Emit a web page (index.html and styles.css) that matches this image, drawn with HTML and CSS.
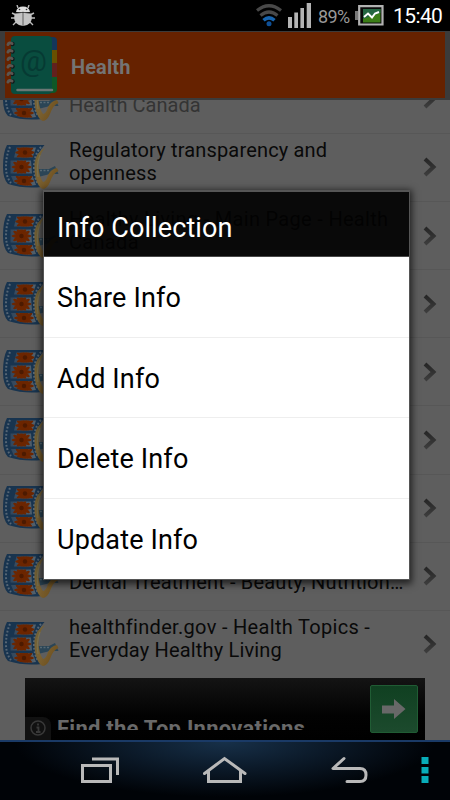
FILE: index.html
```html
<!DOCTYPE html>
<html lang="en">
<head>
<meta charset="utf-8">
<title>Health</title>
<link rel="stylesheet" href="styles.css">
</head>
<body>
<svg class="defs" aria-hidden="true">
  <defs>
    <linearGradient id="chev" x1="0" y1="0" x2="0" y2="1"><stop offset="0" stop-color="#262626"/><stop offset="1" stop-color="#3d3d3d"/></linearGradient>
    <linearGradient id="gold" x1="0" y1="0" x2="1" y2="1"><stop offset="0" stop-color="#6f6038"/><stop offset=".5" stop-color="#7a6132"/><stop offset="1" stop-color="#6a4712"/></linearGradient>
    <linearGradient id="sky" x1="0" y1="0" x2="1" y2="0"><stop offset="0" stop-color="#31465c"/><stop offset="1" stop-color="#56626c"/></linearGradient>
    <g id="flower">
      <g fill="#6c2600"><ellipse rx="10" ry="2.200"/><ellipse rx="9.500" ry="2.200" transform="rotate(30)"/><ellipse rx="8.500" ry="2.200" transform="rotate(60)"/><ellipse rx="8" ry="2.200" transform="rotate(90)"/><ellipse rx="8.500" ry="2.200" transform="rotate(120)"/><ellipse rx="9.500" ry="2.200" transform="rotate(150)"/></g>
      <circle r="2.200" fill="#4c1a00"/>
    </g>
    <clipPath id="f1"><path d="M16.500 4.500H36L32.500 14.500H14Z"/></clipPath>
    <clipPath id="f2"><path d="M10.500 17.500H31L32 30.500H10.500Z"/></clipPath>
    <clipPath id="f3"><path d="M11 33H32.500L36 42Q24 44 14 40Z"/></clipPath>
    <symbol id="film" viewBox="0 0 60 48">
      <path d="M38 26H49L55 23L58.500 31H50L38 34Z" fill="#2b4556"/>
      <path d="M40 27.500H50" stroke="#566872" stroke-width="1.500" stroke-dasharray="2 1.500"/>
      <path d="M7 2H44.500Q37 10 36 21Q35 35 42 44Q24 46 8 41Q3 36 3 24Q3 9 7 2Z" fill="#18344f"/>
      <path d="M16.500 4.500H36L32.500 14.500H14ZM10.500 17.500H31L32 30.500H10.500ZM11 33H32.500L36 42Q24 44 14 40Z" fill="url(#sky)"/>
      <g clip-path="url(#f1)"><use href="#flower" x="25" y="9.500"/></g>
      <g clip-path="url(#f2)"><use href="#flower" x="21.500" y="24"/></g>
      <g clip-path="url(#f3)"><use href="#flower" x="24" y="38"/></g>
      <path d="M10 4Q6 13 6 24Q6 34 11 40M41 4Q34 12 34 24Q34 34 38 41" fill="none" stroke="#566675" stroke-width="2" stroke-dasharray="1.800 1.800"/>
      <path d="M45 5Q36 9 34.500 20Q34 32 37 39Q39.500 45 43 46Q47 46 50 39Q53 30 58.500 28L57 25Q51 26 48 32Q46 39 43 39Q39 34 38.500 23Q38.500 12 45 5Z" fill="url(#gold)"/>
      <path d="M40 12Q36 22 38 34" fill="none" stroke="#77704f" stroke-width="1.200"/>
    </symbol>
    <symbol id="arrow" viewBox="0 0 14 20"><path d="M2 2L10.500 10L2 18" fill="none" stroke="url(#chev)" stroke-width="4"/></symbol>
  </defs>
</svg>
<div class="screen">
  <header class="status">
    <svg class="bug" viewBox="0 0 24 22">
      <path d="M5 10L1 8M4 13H0M5 17L2 20M19 10L23 8M20 13H24M19 17L22 20M7 3L6 0M17 3L18 0" stroke="#bbb" stroke-width="1.400" fill="none"/>
      <path d="M5 7Q6 1.500 12 1.500Q18 1.500 19 7Z" fill="#ddd"/>
      <path d="M4 8H20Q22 14 19 18Q16 21 12 21Q8 21 5 18Q2 14 4 8Z" fill="#c4c4c4"/>
      <path d="M4 8.500Q12 6 20 8.500M12 8V21" stroke="#555" stroke-width=".9" fill="none"/>
      <circle cx="8.500" cy="4.500" r=".8" fill="#333"/><circle cx="15.500" cy="4.500" r=".8" fill="#333"/>
    </svg>
    <div class="indicators">
      <svg class="wifi" viewBox="0 0 26 24">
        <path d="M1 7.500Q13-2 25 7.500" fill="none" stroke="#484848" stroke-width="3.200"/>
        <path d="M4.500 12.500Q13 5.500 21.500 12.500" fill="none" stroke="#484848" stroke-width="3.200"/>
        <path d="M7.500 17.300Q13 12.500 18.500 17.300" fill="none" stroke="#1764ae" stroke-width="3.500"/>
        <circle cx="13" cy="20.800" r="2.500" fill="#0e4f96"/>
      </svg>
      <svg class="signal" viewBox="0 0 24 25"><path d="M0 14H4V25H0ZM6.300 9.500H10V25H6.300ZM12.400 5H16V25H12.400ZM18.700 0H23V25H18.700Z" fill="#b4b4b4"/></svg>
      <span class="percent">89%</span>
      <svg class="battery" viewBox="0 0 29 21">
        <path d="M0 6H3V15H0Z" fill="#777"/><path d="M4.200 1.200H27.500V19.500H4.200Z" fill="#0a0a0a" stroke="#b2b2b2" stroke-width="2.200"/>
        <path d="M8 4H25.500V17.500H8Z" fill="#3b7d17"/><path d="M8 4H25.500V8L8 14Z" fill="#246642"/>
        <path d="M9 12L13 8.500L17 12.500L20 8.500L24 7" fill="none" stroke="#fff" stroke-width="1.900"/>
      </svg>
      <time class="clock">15:40</time>
    </div>
  </header>

  <div class="titlebar">
    <svg class="book" viewBox="0 0 54 60">
      <path d="M42 2H47Q51 2 51 6V16H42Z" fill="#14365a"/><path d="M42 15H51V29H42Z" fill="#685000"/><path d="M42 28H51V43H42Z" fill="#62211e"/><path d="M42 42H51V54Q51 58 47 58H42Z" fill="#0e5827"/>
      <rect x="5" y="1" width="41" height="58" rx="4" fill="#094d3f"/>
      <path d="M11.500 55H46" stroke="#6a7774" stroke-width="2.500" stroke-linecap="round"/>
      <text x="27.500" y="36" text-anchor="middle" class="at">@</text>
      <g fill="#101a1b"><circle cx="6.500" cy="9" r="2.200"/><circle cx="6.500" cy="16.500" r="2.200"/><circle cx="6.500" cy="24" r="2.200"/><circle cx="6.500" cy="31.500" r="2.200"/><circle cx="6.500" cy="39" r="2.200"/><circle cx="6.500" cy="46.500" r="2.200"/></g>
      <g stroke="#5c5651" stroke-width="3" stroke-linecap="round" fill="none"><path d="M2 9.500Q3 7 6 8.500M2 17Q3 14.500 6 16M2 24.500Q3 22 6 23.500M2 32Q3 29.500 6 31M2 39.500Q3 37 6 38.500M2 47Q3 44.500 6 46"/></g>
    </svg>
    <h1>Health</h1>
  </div>

  <main class="list">
    <article class="row"><svg class="film"><use href="#film"/></svg><p><br>Health Canada</p><svg class="arrow"><use href="#arrow"/></svg></article>
    <article class="row"><svg class="film"><use href="#film"/></svg><p>Regulatory transparency and<br>openness</p><svg class="arrow"><use href="#arrow"/></svg></article>
    <article class="row"><svg class="film"><use href="#film"/></svg><p class="wide">Healthy Living - Main Page - Health<br>Canada</p><svg class="arrow"><use href="#arrow"/></svg></article>
    <article class="row"><svg class="film"><use href="#film"/></svg><p></p><svg class="arrow"><use href="#arrow"/></svg></article>
    <article class="row"><svg class="film"><use href="#film"/></svg><p></p><svg class="arrow"><use href="#arrow"/></svg></article>
    <article class="row"><svg class="film"><use href="#film"/></svg><p></p><svg class="arrow"><use href="#arrow"/></svg></article>
    <article class="row"><svg class="film"><use href="#film"/></svg><p></p><svg class="arrow"><use href="#arrow"/></svg></article>
    <article class="row"><svg class="film"><use href="#film"/></svg><p><br>Dental Treatment - Beauty, Nutrition…</p><svg class="arrow"><use href="#arrow"/></svg></article>
    <article class="row"><svg class="film"><use href="#film"/></svg><p><span class="wide">healthfinder.gov - Health Topics -</span><br>Everyday Healthy Living</p><svg class="arrow"><use href="#arrow"/></svg></article>
  </main>

  <aside class="ad">
    <div class="info"><svg viewBox="0 0 16 16"><circle cx="8" cy="8" r="7" fill="none" stroke="#393939" stroke-width="1.500"/><path d="M8 3.500V5.500M6.500 7.500H8.500V12M6 12H10.500" fill="none" stroke="#393939" stroke-width="1.800"/></svg></div>
    <div class="pitch">Find the Top Innovations</div>
    <div class="go"><svg viewBox="0 0 24 20"><path d="M0 6.500H12V0L23.500 10L12 20V14.500H0Z" fill="#686868"/></svg></div>
  </aside>

  <nav class="nav">
    <svg viewBox="0 0 450 60">
      <g fill="none" stroke="#b9b9b9" stroke-width="3">
        <path d="M82.500 25.500H110.500V41.500H82.500Z"/><path d="M92 19H117.500V35"/>
        <path d="M204.500 33.500L224.500 18.500L245 33.500" stroke-linecap="round"/><path d="M208.500 31V41.500H240.500V31"/>
        <path d="M344 18.500L333 28.500H360Q366 28.500 366 35Q366 41.500 360 41.500H347" stroke-linecap="round" stroke-linejoin="round"/>
      </g>
      <path d="M421.500 17H428.500V24H421.500ZM421.500 27H428.500V33.500H421.500ZM421.500 36H428.500V43H421.500Z" fill="#08adb9"/>
    </svg>
  </nav>

  <section class="dialog">
    <h2>Info Collection</h2>
    <ul><li>Share Info</li><li>Add Info</li><li>Delete Info</li><li>Update Info</li></ul>
  </section>
</div>
</body>
</html>
```
FILE: styles.css
```css
* { box-sizing: border-box; margin: 0; padding: 0; }
body { font-family: Roboto, sans-serif; background: #000; }
.defs { position: absolute; width: 0; height: 0; }
.screen { position: relative; width: 450px; height: 800px; overflow: hidden; display: flex; flex-direction: column; }

.status { height: 31px; flex: none; background: #000; display: flex; justify-content: space-between; padding: 0 8px 0 11px; }
.bug { width: 24px; height: 22px; margin-top: 5px; }
.indicators { display: flex; align-items: flex-start; }
.wifi { width: 26px; height: 24px; margin: 3px 6px 0 0; }
.signal { width: 24px; height: 25px; margin: 3px 6px 0 0; }
.percent { font-size: 18px; line-height: 33px; color: #999; width: 37px; letter-spacing: -.6px; }
.battery { width: 29px; height: 21px; margin: 5px 9px 0 0; }
.clock { font-size: 21px; line-height: 33px; color: #fff; width: 49px; letter-spacing: -.6px; }

.titlebar { height: 69px; flex: none; display: flex; align-items: center; border: solid #3b3b3b; border-width: 1px 5px 2px; background: #662200; padding-left: 1px; }
.book { width: 54px; height: 60px; margin-right: 11px; }
.at { font-size: 30px; fill: #063a33; }
h1 { font-size: 20px; line-height: 24px; font-weight: 700; color: #747474; padding-top: 3px; letter-spacing: .1px; }

.list { height: 578px; flex: none; overflow: hidden; background: #5e5e5e; display: flex; flex-direction: column; justify-content: flex-end; }
.row { height: 68.150px; flex: none; display: flex; align-items: center; border-top: 1px solid #575757; }
.film { width: 60px; height: 48px; flex: none; }
.row p { width: 354px; height: 56px; margin-left: 9px; font-size: 20px; line-height: 23px; letter-spacing: .17px; color: #090909; white-space: nowrap; }
.row .wide { letter-spacing: .31px; }
.row:first-child p { color: #343434; letter-spacing: .05px; }
.arrow { width: 14px; height: 20px; }

.ad { height: 62px; flex: none; background: linear-gradient(#141414, #020202 60%, #000); border: solid #5e5e5e; border-width: 0 25px; display: flex; justify-content: space-between; }
.info { width: 26px; height: 23px; margin-top: 39px; background: #111; border-radius: 0 8px 0 0; padding: 3px 0 0 5px; }
.info svg { width: 16px; height: 16px; display: block; }
.pitch { width: 315px; height: 14px; margin-top: 38px; padding-left: 4px; overflow: hidden; font-size: 22px; line-height: 26px; font-weight: 700; letter-spacing: .25px; color: #696969; white-space: nowrap; }
.go { width: 48px; height: 48px; margin: 7px 7px 0 0; border-radius: 2px; border: 1px solid #205c34; background: linear-gradient(#104021, #1c4a2d); display: flex; align-items: center; justify-content: center; }
.go svg { width: 24px; height: 20px; }

.nav { height: 60px; flex: none; border-top: 2px solid #1a3a66; background: radial-gradient(ellipse 210px 55px at 50% 0, #173049, #0b1928 50%, #000307 100%); }
.nav svg { display: block; width: 450px; height: 60px; margin-top: -2px; }

.dialog { position: absolute; left: 43px; top: 190px; width: 367px; height: 390px; border: 1px solid #555; border-top-width: 2px; box-shadow: 0 2px 7px 2px rgba(0,0,0,.65); }
.dialog h2 { height: 65px; border-bottom: 1px solid #484848; background: rgba(2,2,2,.92); color: #fff; font-size: 27px; line-height: 72px; font-weight: 400; letter-spacing: .1px; padding-left: 13px; }
.dialog ul { list-style: none; background: #fff; }
.dialog li { height: 80.500px; border-bottom: 1px solid #eee; padding-left: 13px; font-size: 27px; line-height: 82px; letter-spacing: .15px; color: #000; }
.dialog li:last-child { border-bottom: 0; }
```
